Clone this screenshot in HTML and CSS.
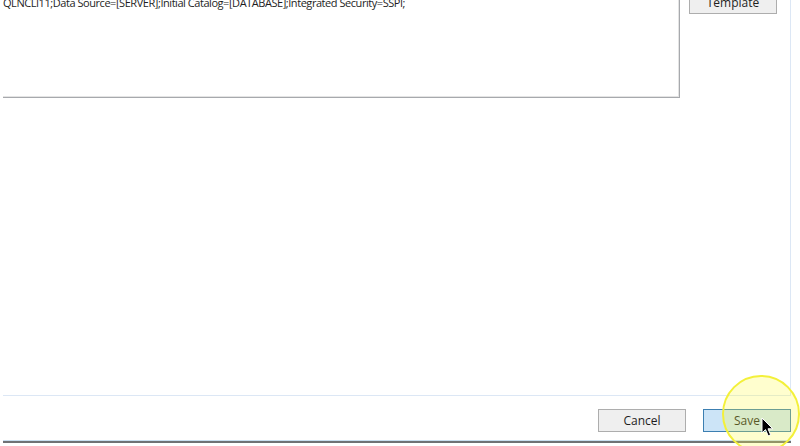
FILE: index.html
```html
<!DOCTYPE html>
<html lang="en">
<head>
  <meta charset="UTF-8">
  <title>Connection Settings</title>
  <link rel="stylesheet" href="styles.css">
</head>
<body>

<div class="dialog">
  <div class="panel">
    <div class="top-row">
      <div class="conn-box">
        <div class="conn-text">QLNCLI11;Data Source=[SERVER];Initial Catalog=[DATABASE];Integrated Security=SSPI;</div>
      </div>
      <div class="side-buttons">
        <button class="btn">Template</button>
      </div>
    </div>
  </div>

  <!-- Footer buttons -->
  <div class="footer">
    <button class="btn">Cancel</button>
    <button class="btn btn-default">Save</button>
  </div>
  <div class="bottom-edge"></div>
</div>

<!-- click highlight + cursor -->
<div class="click-ring"></div>
<svg class="cursor" width="14" height="21" viewBox="0 0 14 21">
  <path d="M1 1 L1 16 L4.5 12.6 L7.2 18.8 L9.6 17.8 L7 11.8 L11.8 11.8 Z" fill="#000" stroke="#fff" stroke-width="1"/>
</svg>

</body>
</html>
```

FILE: styles.css
```css
:root {
  --font: "Open Sans", "Noto Sans", Arial, sans-serif;
  --panel-line: #dce7f5;
  --text: #1e1e1e;
}

html, body {
  margin: 0;
  padding: 0;
  background: #fff;
  overflow: hidden;
  height: 446px;
}

body {
  font-family: var(--font);
  font-size: 12px;
  color: var(--text);
  padding-left: 3px;
}

.dialog {
  width: 788px;
}

.panel {
  height: 395px;
  border-right: 1px solid var(--panel-line);
  border-bottom: 1px solid var(--panel-line);
  overflow: hidden;
}

.top-row {
  display: flex;
  align-items: flex-start;
  gap: 9px;
  margin-top: -9px;
}

.conn-box {
  width: 676px;
  height: 106px;
  border: 1px solid #a7a9ad;
  border-left: none;
  border-top: none;
  box-shadow: inset -1px -1px 0 #e4e4e4;
}

.conn-text {
  font-size: 11px;
  letter-spacing: -0.45px;
  line-height: 16px;
  margin-top: 4px;
  white-space: nowrap;
}

.side-buttons {
  display: flex;
  flex-direction: column;
}

.btn {
  width: 88px;
  height: 23px;
  padding: 0;
  background: #efefef;
  border: 1px solid #adadad;
  font-family: var(--font);
  font-size: 12px;
  color: var(--text);
  line-height: 21px;
}

.btn-default {
  background: #cce4f7;
  border-color: #3c7fb1;
}

.footer {
  display: flex;
  justify-content: flex-end;
  gap: 17px;
  padding: 13px 0 8px 0;
  width: 788px;
}

.bottom-edge {
  height: 1px;
  background: #c9dff0;
  border-bottom: 2px solid #6f7275;
}

.click-ring {
  position: absolute;
  left: 722px;
  top: 375px;
  width: 74px;
  height: 74px;
  border-radius: 50%;
  border: 2px solid #f3f03a;
  background: rgba(255, 250, 60, 0.25);
}

.cursor {
  position: absolute;
  left: 761px;
  top: 417px;
}
```
